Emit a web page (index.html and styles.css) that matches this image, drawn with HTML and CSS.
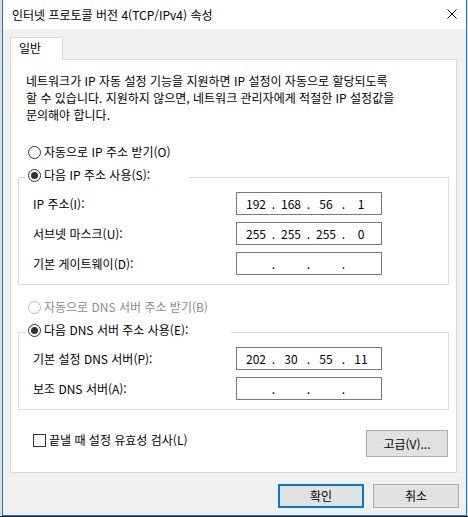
FILE: index.html
```html
<!DOCTYPE html>
<html lang="ko">
<head>
<meta charset="utf-8">
<title>인터넷 프로토콜 버전 4(TCP/IPv4) 속성</title>
<link rel="stylesheet" href="styles.css">
</head>
<body>
<div class="desk">
  <div class="window">
    <div class="titlebar">
      <span class="title">인터넷 프로토콜 버전 4(TCP/IPv4) 속성</span>
      <svg class="close" width="10" height="10" viewBox="0 0 10 10"><path d="M0.5 0.5 L9.5 9.5 M9.5 0.5 L0.5 9.5" stroke="#000" stroke-width="1" fill="none"/></svg>
    </div>
    <div class="content">
      <div class="tabs"><div class="tab">일반</div></div>
      <div class="panel">
        <p class="intro">네트워크가 IP 자동 설정 기능을 지원하면 IP 설정이 자동으로 할당되도록<br>할 수 있습니다. 지원하지 않으면, 네트워크 관리자에게 적절한 IP 설정값을<br>문의해야 합니다.</p>

        <div class="radio"><span class="rb"></span><span>자동으로 IP 주소 받기(O)</span></div>

        <div class="group">
          <div class="legend legend-ip"><span class="rb on"></span><span>다음 IP 주소 사용(S):</span></div>
          <div class="rows">
            <div class="row">
              <span class="label">IP 주소(I):</span>
              <div class="ip"><span>192</span><span>.</span><span>168</span><span>.</span><span>56</span><span>.</span><span>1</span></div>
            </div>
            <div class="row">
              <span class="label">서브넷 마스크(U):</span>
              <div class="ip"><span>255</span><span>.</span><span>255</span><span>.</span><span>255</span><span>.</span><span>0</span></div>
            </div>
            <div class="row">
              <span class="label">기본 게이트웨이(D):</span>
              <div class="ip"><span></span><span>.</span><span></span><span>.</span><span></span><span>.</span><span></span></div>
            </div>
          </div>
        </div>

        <div class="radio disabled"><span class="rb"></span><span>자동으로 DNS 서버 주소 받기(B)</span></div>

        <div class="group">
          <div class="legend legend-dns"><span class="rb on"></span><span>다음 DNS 서버 주소 사용(E):</span></div>
          <div class="rows">
            <div class="row">
              <span class="label">기본 설정 DNS 서버(P):</span>
              <div class="ip"><span>202</span><span>.</span><span>30</span><span>.</span><span>55</span><span>.</span><span>11</span></div>
            </div>
            <div class="row">
              <span class="label">보조 DNS 서버(A):</span>
              <div class="ip"><span></span><span>.</span><span></span><span>.</span><span></span><span>.</span><span></span></div>
            </div>
          </div>
        </div>

        <div class="bottomrow">
          <div class="check"><span class="cb"></span><span>끝낼 때 설정 유효성 검사(L)</span></div>
          <button class="btn btn-adv">고급(V)...</button>
        </div>
      </div>
      <div class="actions">
        <button class="btn btn-ok">확인</button>
        <button class="btn">취소</button>
      </div>
    </div>
  </div>
</div>
</body>
</html>
```
FILE: styles.css
```css
html, body {
  margin: 0;
  padding: 0;
}
body {
  background: #dcdcdc;
  font-family: "Noto Sans CJK KR", "Noto Sans", sans-serif;
  font-size: 12px;
  color: #000;
}
.desk {
  height: 516px;
  border-bottom: 1px solid #1e1e1e;
}
.window {
  margin-left: 2px;
  width: 465px;
  height: 516px;
  box-sizing: border-box;
  border: 1px solid #1479d6;
  border-top: none;
  background: #f0f0f0;
  display: flex;
  flex-direction: column;
}
.titlebar {
  height: 29px;
  flex: none;
  background: #fff;
  display: flex;
  align-items: center;
  justify-content: space-between;
  padding: 0 9px;
}
.title {
  line-height: 16px;
  white-space: nowrap;
}
.close {
  display: block;
  margin-top: -1px;
}
.content {
  padding: 8px 0 0 7px;
  display: flex;
  flex-direction: column;
}
.tabs {
  display: flex;
}
.tab {
  position: relative;
  z-index: 1;
  width: 53px;
  height: 23px;
  box-sizing: border-box;
  background: #fff;
  border: 1px solid #d9d9d9;
  border-bottom: none;
  margin-bottom: -1px;
  padding: 2px 0 0 8px;
  line-height: 16px;
}
.panel {
  width: 447px;
  height: 414px;
  box-sizing: border-box;
  background: #fff;
  border: 1px solid #d9d9d9;
  display: flex;
  flex-direction: column;
}
.intro {
  margin: 12px 0 0 15px;
  line-height: 17px;
  white-space: nowrap;
}
.radio {
  margin: 21px 0 0 17px;
  display: flex;
  align-items: center;
  gap: 3px;
  line-height: 16px;
  height: 16px;
}
.rb {
  width: 13px;
  height: 13px;
  box-sizing: border-box;
  border: 1px solid #333;
  border-radius: 50%;
  background: #fff;
  display: flex;
  align-items: center;
  justify-content: center;
  flex: none;
}
.rb.on::after {
  content: "";
  width: 7px;
  height: 7px;
  border-radius: 50%;
  background: #333;
}
.disabled {
  color: #8b8b8b;
  margin-top: 14px;
}
.disabled .rb {
  border-color: #bcbcbc;
}
.group {
  margin: 17px 7px 0 7px;
  border: 1px solid #dcdcdc;
  padding: 0 0 9px 0;
}
.legend {
  margin: -11px 0 0 7px;
  padding-left: 2px;
  background: #fff;
  display: flex;
  align-items: center;
  gap: 3px;
  height: 16px;
  line-height: 16px;
  white-space: nowrap;
}
.legend-ip {
  width: 160px;
}
.legend-dns {
  width: 203px;
}
.rows {
  margin-top: 9px;
  padding-left: 14px;
  display: flex;
  flex-direction: column;
  gap: 7px;
}
.row {
  display: grid;
  grid-template-columns: 203px 146px;
  align-items: center;
  height: 23px;
}
.label {
  line-height: 16px;
  white-space: nowrap;
}
.ip {
  height: 23px;
  box-sizing: border-box;
  border: 1px solid #7a7a7a;
  background: #fff;
  display: grid;
  grid-template-columns: 30px 5px 30px 5px 30px 5px 30px;
  padding-left: 4px;
  line-height: 21px;
  text-align: center;
}
.bottomrow {
  margin: 20px 8px 0 22px;
  display: flex;
  justify-content: space-between;
  align-items: flex-start;
}
.check {
  margin-top: 2px;
  display: flex;
  align-items: center;
  gap: 3px;
  line-height: 16px;
  height: 16px;
}
.cb {
  width: 13px;
  height: 13px;
  box-sizing: border-box;
  border: 1px solid #333;
  background: #fff;
  flex: none;
}
.btn {
  font-family: inherit;
  font-size: 12px;
  color: #000;
  background: #e1e1e1;
  border: 1px solid #adadad;
  border-radius: 0;
  width: 86px;
  height: 24px;
  padding: 0;
  line-height: 16px;
  margin: 0;
}
.btn-adv {
  width: 82px;
  height: 27px;
}
.btn-ok {
  border: 2px solid #0078d7;
}
.actions {
  margin: 11px 0 0 0;
  padding-right: 7px;
  display: flex;
  justify-content: flex-end;
  gap: 9px;
}
```
